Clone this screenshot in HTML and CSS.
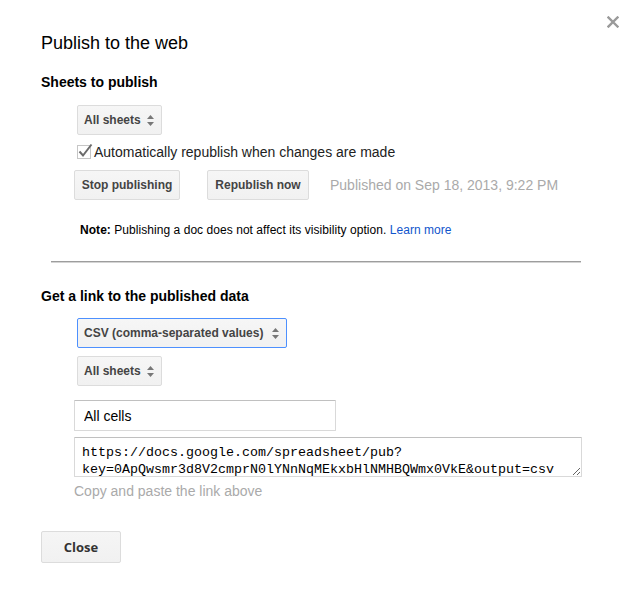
FILE: index.html
```html
<!DOCTYPE html>
<html lang="en">
<head>
<meta charset="utf-8">
<title>Publish to the web</title>
<link rel="stylesheet" href="styles.css">
</head>
<body>
<div class="dialog">
  <span class="close-x" aria-label="Close"><svg width="12" height="12" viewBox="0 0 12 12"><path d="M1.5 1.5L10.5 10.5M10.5 1.5L1.5 10.5" stroke="#9a9a9a" stroke-width="2.4" stroke-linecap="square"/></svg></span>
  <h1 class="title">Publish to the web</h1>

  <h2 class="section-title">Sheets to publish</h2>
  <div class="section">
    <div class="select select-first"><span>All sheets</span><svg class="arrows" width="7" height="11" viewBox="0 0 7 11"><path d="M3.5 0L7 4H0Z M0 7H7L3.5 11Z" fill="#777"/></svg></div>
    <label class="check-row"><span class="checkbox"><svg width="16" height="16" viewBox="0 0 16 16"><rect x="0.5" y="2.5" width="13" height="13" fill="#fff" stroke="#c6c6c6"/><path d="M2.5 8.5L6 12.5L14.5 1.5" fill="none" stroke="#6b6b6b" stroke-width="2"/></svg></span>Automatically republish when changes are made</label>
    <div class="button-row">
      <button class="btn btn-stop">Stop publishing</button>
      <button class="btn btn-republish">Republish now</button>
      <span class="published">Published on Sep 18, 2013, 9:22 PM</span>
    </div>
    <p class="note"><b>Note:</b> Publishing a doc does not affect its visibility option. <a class="link" href="#">Learn more</a></p>
  </div>

  <div class="divider"></div>

  <h2 class="section-title section-title-2">Get a link to the published data</h2>
  <div class="section">
    <div class="select select-focus"><span>CSV (comma-separated values)</span><svg class="arrows" width="7" height="11" viewBox="0 0 7 11"><path d="M3.5 0L7 4H0Z M0 7H7L3.5 11Z" fill="#777"/></svg></div>
    <div class="select select-second"><span>All sheets</span><svg class="arrows" width="7" height="11" viewBox="0 0 7 11"><path d="M3.5 0L7 4H0Z M0 7H7L3.5 11Z" fill="#777"/></svg></div>
    <input class="text-input" type="text" value="All cells">
    <textarea class="link-box" readonly>https://docs.google.com/spreadsheet/pub?key=0ApQwsmr3d8V2cmprN0lYNnNqMEkxbHlNMHBQWmx0VkE&amp;output=csv</textarea>
    <p class="hint">Copy and paste the link above</p>
  </div>

  <div class="footer">
    <button class="btn-close">Close</button>
  </div>
</div>
</body>
</html>
```

FILE: styles.css
```css
html, body {
  margin: 0;
  background: #fff;
}
body {
  font-family: "Liberation Sans", Arial, sans-serif;
  color: #000;
}
.dialog {
  position: relative;
  padding: 33px 0 30px 41px;
}
.close-x {
  position: absolute;
  top: 16px;
  right: 17px;
  width: 12px;
  height: 12px;
  display: block;
}
.close-x svg { display: block; }
.title {
  margin: 0;
  font-size: 18px;
  font-weight: normal;
  line-height: 21px;
  color: #000;
}
.section-title {
  margin: 20px 0 0;
  font-size: 14px;
  font-weight: bold;
  line-height: 17px;
  color: #000;
}
.section-title-2 {
  margin-top: 25px;
}
.section {
  padding-left: 33px;
  display: flex;
  flex-direction: column;
  align-items: flex-start;
}
.select {
  box-sizing: border-box;
  height: 30px;
  margin-left: 3px;
  padding: 0 7px 0 6px;
  display: inline-flex;
  align-items: center;
  gap: 6px;
  border: 1px solid #dcdcdc;
  border-radius: 2px;
  background: linear-gradient(#f6f6f6, #f1f1f1);
  font-size: 12px;
  font-weight: bold;
  color: #444;
}
.select .arrows { display: block; }
.select-first { margin-top: 14px; }
.select-focus {
  margin-top: 13px;
  border-color: #4d90fe;
  gap: 9px;
}
.select-second { margin-top: 8px; }
.check-row {
  margin-top: 8px;
  display: flex;
  align-items: center;
  font-size: 14px;
  line-height: 17px;
  color: #222;
}
.checkbox {
  width: 16px;
  height: 16px;
  margin: 0 1px 3px 3px;
}
.checkbox svg { display: block; }
.button-row {
  margin-top: 8px;
  display: flex;
  align-items: center;
}
.btn {
  box-sizing: border-box;
  height: 30px;
  padding: 0;
  border: 1px solid #dcdcdc;
  border-radius: 2px;
  background: linear-gradient(#f6f6f6, #f1f1f1);
  font-family: "Liberation Sans", Arial, sans-serif;
  font-size: 12px;
  font-weight: bold;
  color: #444;
  text-align: center;
}
.btn-stop { width: 106px; margin-right: 27px; }
.btn-republish { width: 102px; margin-right: 21px; }
.published {
  font-size: 14px;
  color: #aaa;
}
.note {
  margin: 23px 0 0 6px;
  font-size: 12px;
  line-height: 15px;
  letter-spacing: 0.05px;
  color: #000;
}
.link {
  color: #15c;
  text-decoration: none;
}
.divider {
  margin: 23px 0 0 10px;
  width: 530px;
  height: 0;
  border-top: 1px solid #9d9d9d;
  border-bottom: 1px solid #d4d4d4;
}
.text-input {
  box-sizing: border-box;
  margin: 14px 0 0;
  width: 262px;
  height: 31px;
  padding: 0 9px;
  border: 1px solid #d9d9d9;
  border-top-color: #c0c0c0;
  border-radius: 1px;
  background: #fff;
  font-family: "Liberation Sans", Arial, sans-serif;
  font-size: 14px;
  color: #000;
  outline: none;
}
.link-box {
  box-sizing: border-box;
  margin: 6px 0 0;
  width: 508px;
  height: 40px;
  padding: 6px 7px 0;
  border: 1px solid #d9d9d9;
  border-top-color: #c0c0c0;
  border-radius: 1px;
  background: #fff;
  font-family: "Liberation Mono", "Courier New", monospace;
  font-size: 13.33px;
  line-height: 17px;
  color: #000;
  overflow: hidden;
  outline: none;
}
.hint {
  margin: 6px 0 0;
  font-size: 14px;
  line-height: 17px;
  color: #aaa;
}
.footer {
  margin-top: 31px;
}
.btn-close {
  box-sizing: border-box;
  width: 80px;
  height: 32px;
  border: 1px solid #dcdcdc;
  border-radius: 2px;
  background: linear-gradient(#f5f5f5, #f1f1f1);
  font-family: "Open Sans", "Liberation Sans", sans-serif;
  font-size: 13px;
  font-weight: bold;
  color: #333;
}
```
